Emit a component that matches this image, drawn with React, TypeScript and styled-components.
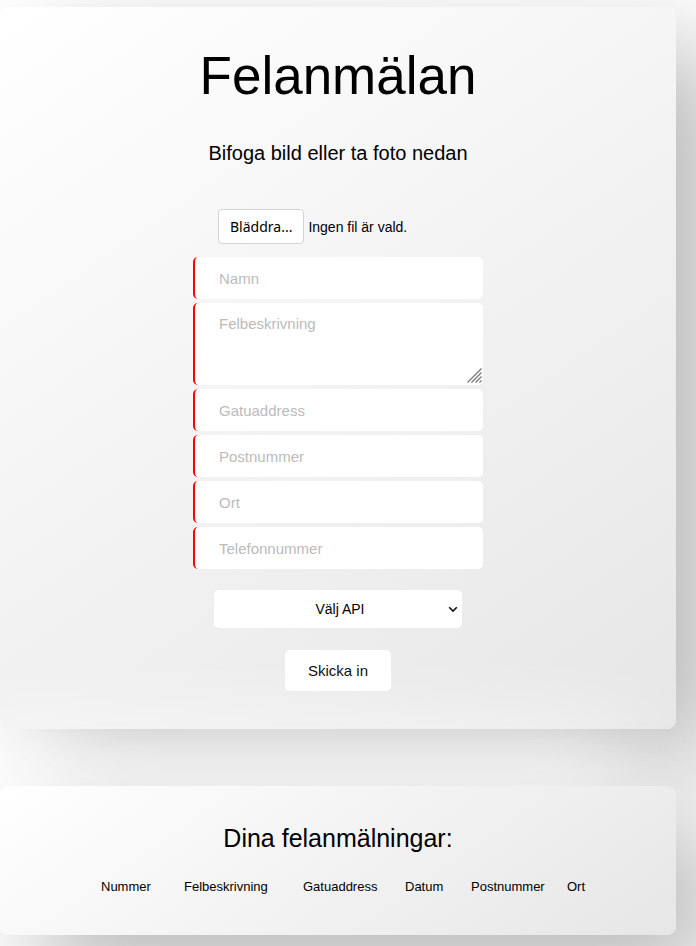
import React from "react";
import styled, { createGlobalStyle } from "styled-components";

const GlobalStyle = createGlobalStyle`
  *, *::before, *::after { box-sizing: border-box; }
  html { background: #fff; }
  body {
    margin: 0;
    overflow-x: hidden;
    color: #000;
    font-family: "Liberation Sans", Arial, sans-serif;
    font-size: 15px;
  }
`;

const Page = styled.main`
  display: flex;
  flex-direction: column;
  gap: 57px;
  padding: 7px 20px 11px 0;
  overflow: hidden;
`;

const Card = styled.section`
  display: flex;
  flex-direction: column;
  align-items: center;
  padding: 38px 20px;
  border-radius: 9px;
  background: linear-gradient(145deg, #ffffff, #e6e6e6);
  box-shadow: 40px 40px 100px #b8b8b8, -40px -40px 100px #ffffff;
`;

const Title = styled.h1`
  margin: 0;
  font-size: 53px;
  line-height: 62px;
  font-weight: 400;
`;

const Lead = styled.p`
  margin: 34px 0 44px;
  font-size: 20px;
  line-height: 24px;
`;

const Subtitle = styled.h2`
  margin: 0 0 24px;
  font-size: 25px;
  line-height: 28px;
  font-weight: 400;
`;

const Form = styled.form`
  display: flex;
  flex-direction: column;
  align-items: center;
  width: 290px;
  max-width: 100%;
`;

const FilePicker = styled.label`
  position: relative;
  display: flex;
  align-items: center;
  align-self: stretch;
  gap: 4px;
  margin-bottom: 13px;
  padding-left: 25px;
  font-size: 14px;
  cursor: pointer;
`;

const FileInput = styled.input`
  position: absolute;
  width: 1px;
  height: 1px;
  opacity: 0;
`;

const FileButton = styled.span`
  height: 35px;
  padding: 0 11px;
  border: 1px solid #ced4da;
  border-radius: 4px;
  background: #fff;
  font-family: "Noto Sans", "Segoe UI", sans-serif;
  font-size: 14px;
  line-height: 33px;
`;

const Fields = styled.div`
  display: flex;
  flex-direction: column;
  align-self: stretch;
  gap: 4px;
  margin-bottom: 21px;
`;

const Field = styled.input`
  width: 100%;
  height: 42px;
  padding: 0 24px;
  border: 0;
  border-left: 2px solid #f00;
  border-radius: 5px;
  outline: 0;
  background: #fff;
  color: #000;
  font: inherit;
  &::placeholder { color: #bbb; opacity: 1; }
`;

const AreaWrap = styled.div`
  position: relative;
  display: flex;
`;

const Area = styled(Field).attrs({ as: "textarea" })`
  height: 82px;
  padding: 12px 24px;
  line-height: 18px;
  resize: none;
`;

const Grip = styled.svg`
  position: absolute;
  right: 1px;
  bottom: 2px;
  pointer-events: none;
`;

const SelectWrap = styled.div`
  position: relative;
  display: flex;
  width: 248px;
  margin-bottom: 22px;
`;

const Select = styled.select`
  appearance: none;
  width: 100%;
  height: 38px;
  padding: 0 16px 0 20px;
  border: 0;
  border-radius: 5px;
  background: #fff;
  color: #000;
  font: inherit;
  font-size: 14px;
  text-align: center;
  text-align-last: center;
`;

const Chevron = styled.svg`
  position: absolute;
  right: 4px;
  top: 14px;
  pointer-events: none;
`;

const Submit = styled.button`
  height: 41px;
  padding: 0 23px;
  border: 0;
  border-radius: 5px;
  background: #fff;
  color: #000;
  font: inherit;
`;

const Table = styled.table`
  width: 498px;
  max-width: 100%;
  table-layout: fixed;
  border-collapse: collapse;
  font-size: 13px;
  line-height: 21px;
`;

const Head = styled.th<{ $width: number }>`
  width: ${(p) => p.$width}px;
  padding: 0 0 0 12px;
  font-weight: 400;
  text-align: left;
  white-space: nowrap;
`;

const columns = [
  { name: "Nummer", width: 83 },
  { name: "Felbeskrivning", width: 119 },
  { name: "Gatuaddress", width: 102 },
  { name: "Datum", width: 66 },
  { name: "Postnummer", width: 96 },
  { name: "Ort", width: 32 },
];

const addressFields = ["Gatuaddress", "Postnummer", "Ort", "Telefonnummer"];

export default function App() {
  return (
    <>
      <GlobalStyle />
      <Page>
        <Card>
          <Title>Felanmälan</Title>
          <Lead>Bifoga bild eller ta foto nedan</Lead>
          <Form onSubmit={(e) => e.preventDefault()}>
            <FilePicker>
              <FileInput type="file" accept="image/*" />
              <FileButton>Bläddra...</FileButton>
              <span>Ingen fil är vald.</span>
            </FilePicker>
            <Fields>
              <Field type="text" placeholder="Namn" aria-label="Namn" />
              <AreaWrap>
                <Area placeholder="Felbeskrivning" aria-label="Felbeskrivning" />
                <Grip width="15" height="15" viewBox="0 0 15 15" fill="none" stroke="#777" strokeWidth="1.3" aria-hidden="true">
                  <path d="M0.5 14.5 14.5 0.5M4.5 14.5 14.5 4.5M8.5 14.5 14.5 8.5M12.5 14.5 14.5 12.5" />
                </Grip>
              </AreaWrap>
              {addressFields.map((name) => (
                <Field key={name} type="text" placeholder={name} aria-label={name} />
              ))}
            </Fields>
            <SelectWrap>
              <Select aria-label="Välj API" defaultValue="">
                <option value="">Välj API</option>
              </Select>
              <Chevron width="10" height="10" viewBox="0 0 10 10" fill="none" stroke="#111" strokeWidth="1.6" aria-hidden="true">
                <path d="M1.2 3.2 5 7 8.8 3.2" />
              </Chevron>
            </SelectWrap>
            <Submit type="submit">Skicka in</Submit>
          </Form>
        </Card>
        <Card>
          <Subtitle>Dina felanmälningar:</Subtitle>
          <Table>
            <thead>
              <tr>
                {columns.map((c) => (
                  <Head key={c.name} scope="col" $width={c.width}>{c.name}</Head>
                ))}
              </tr>
            </thead>
          </Table>
        </Card>
      </Page>
    </>
  );
}
